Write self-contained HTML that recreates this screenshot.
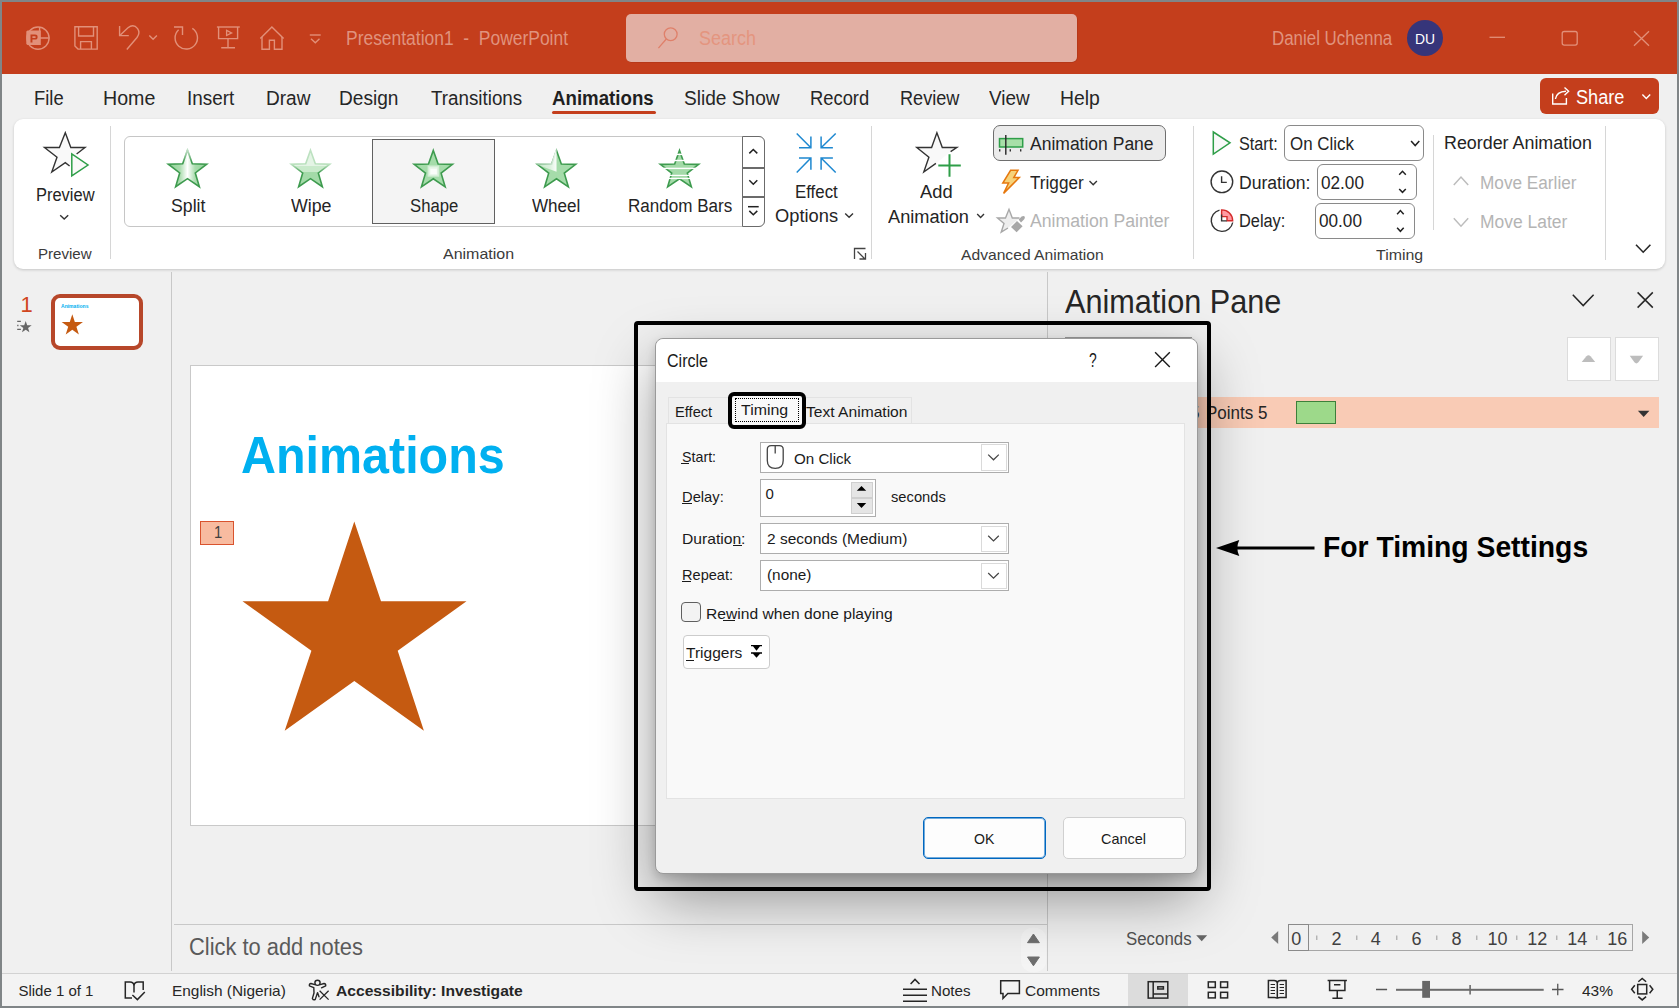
<!DOCTYPE html><html><head><meta charset="utf-8"><style>
html,body{margin:0;padding:0;}
body{width:1679px;height:1008px;overflow:hidden;position:relative;background:#f0f0f0;font-family:"Liberation Sans",sans-serif;}
.r{position:absolute;box-sizing:border-box;}
.t{position:absolute;white-space:pre;transform-origin:0 0;}
</style></head><body>
<div class="r" style="left:0px;top:0px;width:1679px;height:1008px;background:#f0f0f0;"></div>
<div class="r" style="left:2px;top:2px;width:1675px;height:72px;background:#c43e1c;"></div>
<div class="t" style="left:345.70px;top:28.299999999999997px;font-size:20px;line-height:20px;color:#e0937e;transform:scaleX(0.8720);">Presentation1  -  PowerPoint</div>
<div class="r" style="left:626px;top:14px;width:451px;height:48px;background:#e2afa3;border-radius:5px;box-shadow:0.5px 0.5px 0 rgba(120,30,10,0.35);"></div>
<div class="t" style="left:699.00px;top:28.299999999999997px;font-size:20px;line-height:20px;color:#e4957f;transform:scaleX(0.8991);">Search</div>
<div class="t" style="left:1271.70px;top:28.299999999999997px;font-size:20px;line-height:20px;color:#e0937e;transform:scaleX(0.8448);">Daniel Uchenna</div>
<div class="r" style="left:1407px;top:20px;width:36px;height:36px;background:#36357a;border-radius:50%;"></div>
<div class="t" style="left:1415.00px;top:31.75px;font-size:14px;line-height:14px;color:#ffffff;transform:scaleX(0.9901);">DU</div>
<svg class="r" style="left:0px;top:0px;" width="340" height="74" viewBox="0 0 340 74"><g fill="none" stroke="#e29079" stroke-width="1.4"><circle cx="38" cy="38.1" r="11.1"/><path d="M39.6 27 V38 H49.3"/></g><path fill="#e29079" d="M26.3 31.5 L27.5 30.4 H40.8 V45 H27.5 L26.3 44 Z"/><path fill="#c43e1c" d="M30.5 34.6 H35 Q37.6 34.6 37.6 37 Q37.6 39.6 35 39.6 H32.4 V42.6 H30.5 Z M32.4 36.2 V38 H34.8 Q35.8 38 35.8 37.1 Q35.8 36.2 34.8 36.2 Z"/><g fill="none" stroke="#e29079" stroke-width="1.4"><path d="M74.9 26.7 H97.2 V49.1 H78 L74.9 46 Z"/><path d="M78.6 26.7 V36 H93.5 V26.7"/><path d="M80.6 49.1 V41.6 H91.4 V49.1"/></g><g fill="none" stroke="#e29079" stroke-width="1.4"><path d="M119.6 26 V35.6 H128.8"/><path d="M119.8 35.4 L128 27.8 Q133.5 23.5 137.6 28.6 Q140.5 32.8 137 37.5 L126.8 49.5"/><path d="M149.3 35.4 L153.1 39.3 L156.9 35.4"/></g><g fill="none" stroke="#e29079" stroke-width="1.4"><path d="M178.6 29.7 A11.2 11.2 0 1 0 192.3 28.4"/><path d="M174 27 H182.5 V35"/></g><g fill="none" stroke="#e29079" stroke-width="1.4"><path d="M216.9 27 H239.8"/><path d="M218.6 27 V38.6 H237.6 V27"/><path d="M228 38.6 V47.7 M221.2 47.7 H235"/></g><path fill="none" stroke="#e29079" stroke-width="1.3" d="M226.6 30.3 V35.5 L231.6 32.9 Z"/><g fill="none" stroke="#e29079" stroke-width="1.4"><path d="M260.3 38.6 L271.9 27 L283.6 38.6"/><path d="M262 37 V49.2 H269.4 V40.3 H274.4 V49.2 H282 V37"/></g><g fill="none" stroke="#e29079" stroke-width="1.4"><path d="M309.8 35 H320.7"/><path d="M311 38.8 L315.3 42.8 L319.5 38.8"/></g></svg>
<svg class="r" style="left:640px;top:20px;" width="60" height="36" viewBox="0 0 60 36"><g fill="none" stroke="#df806a" stroke-width="1.3"><circle cx="30.7" cy="14.3" r="6.4"/><path d="M26.3 19 L18.4 28.2"/></g></svg>
<svg class="r" style="left:1480px;top:20px;" width="180" height="36" viewBox="0 0 180 36"><g fill="none" stroke="#e29079" stroke-width="1.3"><path d="M9.5 17.3 H25"/><rect x="82.2" y="11.5" width="15" height="13.6" rx="2"/><path d="M154 11.2 L169 25.8 M169 11.2 L154 25.8"/></g></svg>
<div class="t" style="left:34.40px;top:88.1px;font-size:20px;line-height:20px;color:#262626;transform:scaleX(0.9193);">File</div>
<div class="t" style="left:103.30px;top:88.1px;font-size:20px;line-height:20px;color:#262626;transform:scaleX(0.9813);">Home</div>
<div class="t" style="left:187.20px;top:88.1px;font-size:20px;line-height:20px;color:#262626;transform:scaleX(0.9440);">Insert</div>
<div class="t" style="left:265.50px;top:88.1px;font-size:20px;line-height:20px;color:#262626;transform:scaleX(0.9529);">Draw</div>
<div class="t" style="left:339.20px;top:88.1px;font-size:20px;line-height:20px;color:#262626;transform:scaleX(0.9551);">Design</div>
<div class="t" style="left:430.50px;top:88.1px;font-size:20px;line-height:20px;color:#262626;transform:scaleX(0.9392);">Transitions</div>
<div class="t" style="left:684.20px;top:88.1px;font-size:20px;line-height:20px;color:#262626;transform:scaleX(0.9550);">Slide Show</div>
<div class="t" style="left:809.70px;top:88.1px;font-size:20px;line-height:20px;color:#262626;transform:scaleX(0.9178);">Record</div>
<div class="t" style="left:899.60px;top:88.1px;font-size:20px;line-height:20px;color:#262626;transform:scaleX(0.9055);">Review</div>
<div class="t" style="left:989.20px;top:88.1px;font-size:20px;line-height:20px;color:#262626;transform:scaleX(0.9442);">View</div>
<div class="t" style="left:1060.20px;top:88.1px;font-size:20px;line-height:20px;color:#262626;transform:scaleX(0.9684);">Help</div>
<div class="t" style="left:552.30px;top:88.1px;font-size:20px;line-height:20px;color:#1f1f1f;font-weight:bold;transform:scaleX(0.9339);">Animations</div>
<div class="r" style="left:552px;top:111px;width:104px;height:3px;background:#c43e1c;border-radius:2px;"></div>
<div class="r" style="left:1540px;top:78px;width:119px;height:36px;background:#c43e1c;border-radius:6px;"></div>
<div class="t" style="left:1576.30px;top:86.5px;font-size:20px;line-height:20px;color:#ffffff;transform:scaleX(0.9064);">Share</div>
<svg class="r" style="left:1540px;top:78px;" width="120" height="36" viewBox="0 0 120 36"><g fill="none" stroke="#fff" stroke-width="1.4"><path d="M12.7 15.4 V26 H26.4 V20"/><path d="M15.4 21 Q16.5 13.5 26 13.2"/><path d="M24.5 9.5 L28.6 13.3 L24.5 17.2"/><path d="M102.4 16.4 L106.3 20.4 L110.2 16.4"/></g></svg>
<div class="r" style="left:14px;top:119px;width:1651px;height:150px;background:#fff;border-radius:9px;box-shadow:0 1px 3px rgba(0,0,0,0.18);"></div>
<div class="t" style="left:36.20px;top:185.7px;font-size:18px;line-height:18px;color:#242424;transform:scaleX(0.9142);">Preview</div>
<div class="t" style="left:37.60px;top:246.39999999999998px;font-size:15px;line-height:15px;color:#3b3b3b;transform:scaleX(1.0056);">Preview</div>
<div class="r" style="left:110px;top:126px;width:1px;height:133px;background:#d6d6d6;"></div>
<div class="r" style="left:124px;top:136px;width:641px;height:91px;border:1px solid #c6c6c6;border-radius:6px;"></div>
<div class="r" style="left:372px;top:139px;width:123px;height:85px;background:#f4f4f4;border:1px solid #616161;"></div>
<div class="t" style="left:170.60px;top:196.8px;font-size:18px;line-height:18px;color:#242424;transform:scaleX(0.9829);">Split</div>
<div class="t" style="left:290.50px;top:197px;font-size:18px;line-height:18px;color:#242424;transform:scaleX(0.9878);">Wipe</div>
<div class="t" style="left:409.50px;top:197px;font-size:18px;line-height:18px;color:#242424;transform:scaleX(0.9271);">Shape</div>
<div class="t" style="left:532.40px;top:197px;font-size:18px;line-height:18px;color:#242424;transform:scaleX(0.9471);">Wheel</div>
<div class="t" style="left:628.00px;top:197px;font-size:18px;line-height:18px;color:#242424;transform:scaleX(0.9473);">Random Bars</div>
<div class="r" style="left:742px;top:136px;width:23px;height:91px;background:#fff;border:1px solid #6b6b6b;border-radius:0 6px 6px 0;"></div>
<div class="r" style="left:742px;top:167px;width:23px;height:2px;background:#6b6b6b;"></div>
<div class="r" style="left:742px;top:196px;width:23px;height:2px;background:#6b6b6b;"></div>
<div class="t" style="left:795.00px;top:183.3px;font-size:18px;line-height:18px;color:#242424;transform:scaleX(0.9365);">Effect</div>
<div class="t" style="left:775.30px;top:207.2px;font-size:18px;line-height:18px;color:#242424;transform:scaleX(1.0161);">Options</div>
<div class="t" style="left:443.40px;top:246px;font-size:15px;line-height:15px;color:#3b3b3b;transform:scaleX(1.0660);">Animation</div>
<div class="r" style="left:871px;top:126px;width:1px;height:133px;background:#d6d6d6;"></div>
<div class="t" style="left:920.40px;top:183.4px;font-size:18px;line-height:18px;color:#242424;transform:scaleX(1.0188);">Add</div>
<div class="t" style="left:887.60px;top:207.7px;font-size:18px;line-height:18px;color:#242424;transform:scaleX(1.0112);">Animation</div>
<div class="r" style="left:993px;top:125px;width:173px;height:36px;background:#ebebeb;border:1px solid #6e6e6e;border-radius:7px;"></div>
<div class="t" style="left:1029.60px;top:134.8px;font-size:18px;line-height:18px;color:#242424;transform:scaleX(0.9725);">Animation Pane</div>
<div class="t" style="left:1029.60px;top:173.75px;font-size:18px;line-height:18px;color:#242424;transform:scaleX(0.9520);">Trigger</div>
<div class="t" style="left:1029.60px;top:212.4px;font-size:18px;line-height:18px;color:#b4b4b4;transform:scaleX(0.9810);">Animation Painter</div>
<div class="t" style="left:960.60px;top:246.89999999999998px;font-size:15px;line-height:15px;color:#3b3b3b;transform:scaleX(1.0431);">Advanced Animation</div>
<div class="r" style="left:1193px;top:126px;width:1px;height:133px;background:#d6d6d6;"></div>
<div class="t" style="left:1238.90px;top:134.8px;font-size:18px;line-height:18px;color:#242424;transform:scaleX(0.9000);">Start:</div>
<div class="r" style="left:1284px;top:125px;width:140px;height:36px;background:#fff;border:1px solid #8a8a8a;border-radius:6px;"></div>
<div class="t" style="left:1289.50px;top:134.8px;font-size:18px;line-height:18px;color:#242424;transform:scaleX(0.9398);">On Click</div>
<div class="t" style="left:1239.00px;top:173.75px;font-size:18px;line-height:18px;color:#242424;transform:scaleX(0.9767);">Duration:</div>
<div class="r" style="left:1317px;top:164px;width:100px;height:36px;background:#fff;border:1px solid #8a8a8a;border-radius:6px;"></div>
<div class="t" style="left:1320.70px;top:173.75px;font-size:18px;line-height:18px;color:#242424;transform:scaleX(0.9533);">02.00</div>
<div class="t" style="left:1239.00px;top:212.4px;font-size:18px;line-height:18px;color:#242424;transform:scaleX(0.9078);">Delay:</div>
<div class="r" style="left:1315px;top:203px;width:100px;height:36px;background:#fff;border:1px solid #8a8a8a;border-radius:6px;"></div>
<div class="t" style="left:1318.50px;top:212.4px;font-size:18px;line-height:18px;color:#242424;transform:scaleX(0.9533);">00.00</div>
<div class="t" style="left:1375.50px;top:246.89999999999998px;font-size:15px;line-height:15px;color:#3b3b3b;transform:scaleX(1.0607);">Timing</div>
<div class="r" style="left:1433px;top:135px;width:1px;height:95px;background:#d6d6d6;"></div>
<div class="t" style="left:1443.70px;top:134px;font-size:18px;line-height:18px;color:#242424;transform:scaleX(0.9926);">Reorder Animation</div>
<div class="t" style="left:1479.80px;top:173.7px;font-size:18px;line-height:18px;color:#b4b4b4;transform:scaleX(0.9554);">Move Earlier</div>
<div class="t" style="left:1479.80px;top:213px;font-size:18px;line-height:18px;color:#b4b4b4;transform:scaleX(0.9689);">Move Later</div>
<div class="r" style="left:1605px;top:126px;width:1px;height:134px;background:#d6d6d6;"></div>
<svg class="r" style="left:0px;top:0px;" width="1679" height="280" viewBox="0 0 1679 280"><defs>
<linearGradient id="gSplit" x1="0" x2="1" y1="0" y2="0"><stop offset="0" stop-color="#8fd197"/><stop offset="0.3" stop-color="#a9dcad"/><stop offset="0.5" stop-color="#ffffff"/><stop offset="0.7" stop-color="#a9dcad"/><stop offset="1" stop-color="#8fd197"/></linearGradient>
<linearGradient id="gWipe" x1="0" x2="0" y1="0" y2="1"><stop offset="0" stop-color="#e4f4e5"/><stop offset="0.42" stop-color="#e4f4e5"/><stop offset="0.42" stop-color="#c9eacb"/><stop offset="0.6" stop-color="#c9eacb"/><stop offset="0.6" stop-color="#a3daa8"/><stop offset="1" stop-color="#a3daa8"/></linearGradient>
<linearGradient id="gWipeS" x1="0" x2="0" y1="0" y2="1"><stop offset="0" stop-color="#bfe2c3"/><stop offset="0.4" stop-color="#b6dfba"/><stop offset="0.62" stop-color="#3e9b4f"/><stop offset="1" stop-color="#3e9b4f"/></linearGradient>
<radialGradient id="gShape" cx="0.5" cy="0.55" r="0.5"><stop offset="0" stop-color="#ffffff"/><stop offset="0.18" stop-color="#e6f5e7"/><stop offset="0.45" stop-color="#a8dcac"/><stop offset="1" stop-color="#a8dcac"/></radialGradient>
<linearGradient id="gWheel" x1="0" x2="1" y1="0" y2="0.4"><stop offset="0" stop-color="#cdebcf"/><stop offset="0.48" stop-color="#e8f6e9"/><stop offset="0.5" stop-color="#a8dcac"/><stop offset="1" stop-color="#a3daa8"/></linearGradient>
</defs><polygon points="187.50,150.20 192.32,163.77 206.71,164.16 195.30,172.93 199.37,186.74 187.50,178.60 175.63,186.74 179.70,172.93 168.29,164.16 182.68,163.77" fill="url(#gSplit)" stroke="#3e9b4f" stroke-width="1.6"/><clipPath id="cSp"><polygon points="187.50,147.20 192.79,163.12 209.56,163.23 196.06,173.18 201.14,189.17 187.50,179.40 173.86,189.17 178.94,173.18 165.44,163.23 182.21,163.12"/></clipPath><linearGradient id="gSp2" x1="0" x2="0" y1="0" y2="1"><stop offset="0" stop-color="#fff" stop-opacity="0.9"/><stop offset="0.5" stop-color="#fff" stop-opacity="0.55"/><stop offset="1" stop-color="#fff" stop-opacity="0"/></linearGradient><rect clip-path="url(#cSp)" x="181" y="144" width="13" height="18" fill="url(#gSp2)"/><polygon points="310.50,150.20 315.32,163.77 329.71,164.16 318.30,172.93 322.37,186.74 310.50,178.60 298.63,186.74 302.70,172.93 291.29,164.16 305.68,163.77" fill="url(#gWipe)" stroke="url(#gWipeS)" stroke-width="1.6"/><polygon points="433.30,150.40 438.12,163.97 452.51,164.36 441.10,173.13 445.17,186.94 433.30,178.80 421.43,186.94 425.50,173.13 414.09,164.36 428.48,163.97" fill="#a5dcaa" stroke="#3e9b4f" stroke-width="1.6"/><rect x="427.6" y="165.5" width="11.6" height="11.2" fill="#d3eed5"/><rect x="429.2" y="167.2" width="8.4" height="8.2" fill="#e8f6e9"/><rect x="430.4" y="168.8" width="6.4" height="5.4" fill="#fafdfa"/><polygon points="556.50,150.40 561.32,163.97 575.71,164.36 564.30,173.13 568.37,186.94 556.50,178.80 544.63,186.94 548.70,173.13 537.29,164.36 551.68,163.97" fill="#a5dcaa" stroke="#3e9b4f" stroke-width="1.6"/><clipPath id="cWh"><polygon points="556.50,147.40 561.79,163.32 578.56,163.43 565.06,173.38 570.14,189.37 556.50,179.60 542.86,189.37 547.94,173.38 534.44,163.43 551.21,163.32"/></clipPath><linearGradient id="gWh2" x1="0" x2="1" y1="0" y2="0"><stop offset="0" stop-color="#fff" stop-opacity="0.35"/><stop offset="0.75" stop-color="#fff" stop-opacity="0.6"/><stop offset="1" stop-color="#fff" stop-opacity="0.95"/></linearGradient><path clip-path="url(#cWh)" d="M556.5 171.8 V142 H530 V162 Z" fill="url(#gWh2)"/><clipPath id="cRB"><polygon points="679.50,150.40 684.32,163.97 698.71,164.36 687.30,173.13 691.37,186.94 679.50,178.80 667.63,186.94 671.70,173.13 660.29,164.36 674.68,163.97"/></clipPath><polygon points="679.50,150.40 684.32,163.97 698.71,164.36 687.30,173.13 691.37,186.94 679.50,178.80 667.63,186.94 671.70,173.13 660.29,164.36 674.68,163.97" fill="#a3daa8" stroke="#3e9b4f" stroke-width="1.6"/><g fill="#ffffff"><rect x="655" y="153.7" width="50" height="1.4"/><rect x="655" y="159.8" width="50" height="1.4"/><rect x="655" y="167.7" width="50" height="1.4"/><rect x="655" y="174.8" width="50" height="1.2"/><rect x="655" y="177.8" width="50" height="1.3"/></g><g fill="#f9f9f9" stroke="#333" stroke-width="1.4" stroke-linejoin="miter"><path d="M69.6 166 L65.3 162.6 L51.8 172 L57 157.2 L44.5 147.5 L59.4 147.5 L65.3 132.8 L70.8 147.5 L85 147.5 L76.6 154"/></g><path d="M71.8 154 V175.8 L88 165 Z" fill="#f9f9f9" stroke="#2e9e48" stroke-width="1.5" stroke-linejoin="miter"/><path d="M60.2 215.2 L64.2 219 L68.2 215.2" fill="none" stroke="#333" stroke-width="1.4"/><g fill="none" stroke="#222" stroke-width="1.5"><path d="M749.3 153.4 L753.3 149.5 L757.3 153.4"/><path d="M749.3 180.2 L753.3 184.2 L757.3 180.2"/><path d="M748 206.7 H758.7"/><path d="M749.3 210.9 L753.3 214.8 L757.3 210.9"/></g><g fill="none" stroke="#1e88d0" stroke-width="1.5"><path d="M796.7 133.5 L810.9 147.7 M810.9 136.4 V147.7 H799"/><path d="M835.7 133.5 L821.1 147.7 M821.1 136.4 V147.7 H832.9"/><path d="M796.7 172.5 L810.9 158 M810.9 169.7 V158 H799"/><path d="M835.7 172.5 L821.1 158 M821.1 169.7 V158 H832.9"/></g><path d="M845.2 213.4 L849.1 217.3 L853 213.4" fill="none" stroke="#333" stroke-width="1.4"/><g fill="none" stroke="#444" stroke-width="1.3"><path d="M854.5 259 V248.5 H865.5"/><path d="M857.5 251.5 L865.2 259.2 M859.5 259 H865.5 V253"/></g><g fill="#f9f9f9" stroke="#333" stroke-width="1.4"><path d="M935.9 163.4 L923.8 172 L928.9 157.2 L916.8 147.5 L931.6 147.5 L936.9 132.8 L942.3 147.5 L956.8 147.5 L950.6 151.6"/></g><g stroke="#2e9e48" stroke-width="2"><path d="M949.5 154.2 V176.7 M938.3 165.5 H960.8"/></g><path d="M977.2 214 L980.6 217.4 L984 214" fill="none" stroke="#333" stroke-width="1.4"/><rect x="999.5" y="138.6" width="23.2" height="8.4" fill="#a8dfa8" stroke="#2e9e48" stroke-width="1.5"/><path d="M1005.8 135 V154.8" stroke="#262626" stroke-width="1.4"/><g fill="#333"><rect x="999" y="149.2" width="1.4" height="2.3"/><rect x="1009.6" y="149.2" width="1.4" height="2.3"/><rect x="1020" y="149.2" width="1.4" height="2.3"/></g><path d="M1018 170.3 H1010.6 L1002.8 183 H1008.6 L1003.6 193.4 L1019.3 177.6 H1013.8 Z" fill="#f6d27a" stroke="#e6780e" stroke-width="1.5" stroke-linejoin="miter"/><path d="M1089.5 181 L1093.2 184.7 L1096.9 181" fill="none" stroke="#333" stroke-width="1.4"/><g fill="#eeeeee" stroke="#a8a8a8" stroke-width="1.4"><path d="M1008 228 L1001.2 232.2 L1004 223.5 L997.5 218 L1005.5 218 L1009 209.3 L1012.3 218 L1019.5 218"/></g><path d="M1011 227 L1017 221 L1022.6 226.3 L1016.6 232.3 Z M1018.6 219.6 L1021.6 216.6 Q1023.6 215.3 1024.6 216.6 Q1025.3 218 1024 219.6 L1021 222.6 Z" fill="#a8a8a8"/><path d="M1213.3 132 V154 L1230 142.8 Z" fill="#f9f9f9" stroke="#2e9e48" stroke-width="1.5"/><g fill="none" stroke="#333" stroke-width="1.4"><circle cx="1221.9" cy="181.8" r="10.8"/><path d="M1221.6 176.2 V182.4 H1226.8"/></g><path d="M1221.6 209.9 A10.8 10.8 0 0 1 1232.7 220.7 H1227 V216.6 H1221.6 Z" fill="#ff9aa2" stroke="#d42a2a" stroke-width="1.4"/><g fill="none" stroke="#333" stroke-width="1.4"><path d="M1219.5 210.1 A10.8 10.8 0 1 0 1232.7 222.5"/><path d="M1221.6 214.5 V220.9 H1226.8"/></g><g fill="none" stroke="#222" stroke-width="1.5"><path d="M1411.1 141 L1415.2 145.6 L1419.3 141"/><path d="M1399.2 174.7 L1402.5 171.3 L1405.8 174.7 M1399.2 188.9 L1402.5 192.3 L1405.8 188.9"/><path d="M1397.1 214.3 L1400.4 210.6 L1403.7 214.3 M1397.1 227.7 L1400.4 231.3 L1403.7 227.7"/></g><g fill="none" stroke="#bdbdbd" stroke-width="1.5"><path d="M1453.8 185 L1461 177 L1468.2 185"/><path d="M1453.8 218.2 L1461 226.2 L1468.2 218.2"/></g><path d="M1636 244.8 L1643.2 252.2 L1650.4 244.8" fill="none" stroke="#262626" stroke-width="1.6"/></svg>
<div class="r" style="left:171px;top:272px;width:1px;height:699px;background:#c8c8c8;"></div>
<div class="r" style="left:1047px;top:272px;width:1px;height:699px;background:#c8c8c8;"></div>
<div class="r" style="left:174px;top:924px;width:873px;height:1px;background:#c8c8c8;"></div>
<div class="t" style="left:20.50px;top:293.8px;font-size:22px;line-height:22px;color:#d0461f;">1</div>
<div class="r" style="left:51px;top:294px;width:92px;height:56px;background:#fff;border:4px solid #b7472a;border-radius:9px;"></div>
<div class="t" style="left:61px;top:303px;font-size:12px;line-height:12px;color:#00b0f0;font-weight:bold;transform:scale(0.42,0.5);">Animations</div><div class="r" style="left:190px;top:365px;width:819px;height:461px;background:#fff;border:1px solid #c9c9c9;"></div>
<div class="t" style="left:240.60px;top:428.5px;font-size:52px;line-height:52px;color:#00b0f0;font-weight:bold;transform:scaleX(0.9315);">Animations</div>
<div class="r" style="left:200px;top:521px;width:34px;height:24px;background:#f8bba0;border:1px solid #d9532e;"></div>
<div class="t" style="left:213.50px;top:525.4px;font-size:16px;line-height:16px;color:#404040;transform:scaleX(0.9213);">1</div>
<svg class="r" style="left:230px;top:510px;" width="250" height="230" viewBox="0 0 250 230"><polygon fill="#c55a11" points="124.3,11.4 151,91.2 236.5,91.2 167.7,140.7 193.9,220.8 124.3,171.1 54.7,220.8 81.4,140.7 12.5,91.2 98.1,91.2"/></svg>
<div class="t" style="left:189.00px;top:935.8px;font-size:23px;line-height:23px;color:#5a5a5a;transform:scaleX(0.9508);">Click to add notes</div>
<div class="t" style="left:1064.80px;top:284.9px;font-size:33px;line-height:33px;color:#262626;transform:scaleX(0.9283);">Animation Pane</div>
<div class="r" style="left:1567px;top:337px;width:44px;height:44px;background:#fff;border:1px solid #dcdcdc;"></div>
<div class="r" style="left:1615px;top:337px;width:44px;height:44px;background:#fff;border:1px solid #dcdcdc;"></div>
<div class="r" style="left:1160px;top:397px;width:499px;height:31px;background:#f9cbb5;"></div>
<div class="t" style="left:1205.80px;top:404px;font-size:18px;line-height:18px;color:#262626;transform:scaleX(0.9446);">Points 5</div>
<div class="t" style="left:1189.50px;top:404px;font-size:18px;line-height:18px;color:#262626;">5</div>
<div class="r" style="left:1296px;top:401px;width:40px;height:23px;background:#9dd98a;border:1px solid #3d7f3a;"></div>
<div class="t" style="left:1322.70px;top:532.4px;font-size:30px;line-height:30px;color:#000000;font-weight:bold;transform:scaleX(0.9431);">For Timing Settings</div>
<div class="t" style="left:1125.50px;top:929.8px;font-size:18px;line-height:18px;color:#505050;transform:scaleX(0.9358);">Seconds</div>
<div class="r" style="left:1288px;top:924px;width:345px;height:27px;border:1px solid #a6a6a6;"></div>
<div class="r" style="left:1288px;top:924px;width:21px;height:27px;border:1px solid #8a8a8a;"></div>
<div class="t" style="left:1291.20px;top:929.8px;font-size:18px;line-height:18px;color:#404040;">0</div>
<div class="t" style="left:1331.40px;top:929.8px;font-size:18px;line-height:18px;color:#404040;">2</div>
<div class="t" style="left:1370.70px;top:929.8px;font-size:18px;line-height:18px;color:#404040;">4</div>
<div class="t" style="left:1411.50px;top:929.8px;font-size:18px;line-height:18px;color:#404040;">6</div>
<div class="t" style="left:1451.40px;top:929.8px;font-size:18px;line-height:18px;color:#404040;">8</div>
<div class="t" style="left:1487.60px;top:929.8px;font-size:18px;line-height:18px;color:#404040;">10</div>
<div class="t" style="left:1527.20px;top:929.8px;font-size:18px;line-height:18px;color:#404040;">12</div>
<div class="t" style="left:1567.30px;top:929.8px;font-size:18px;line-height:18px;color:#404040;">14</div>
<div class="t" style="left:1607.20px;top:929.8px;font-size:18px;line-height:18px;color:#404040;">16</div>
<div class="r" style="left:2px;top:973px;width:1675px;height:1px;background:#d2d2d2;"></div>
<div class="r" style="left:2px;top:974px;width:1675px;height:32px;background:#f3f3f3;"></div>
<div class="r" style="left:1128px;top:974px;width:60px;height:32px;background:#dcdcdc;"></div>
<div class="t" style="left:18.40px;top:982.7px;font-size:15px;line-height:15px;color:#262626;">Slide 1 of 1</div>
<div class="t" style="left:171.50px;top:982.7px;font-size:15px;line-height:15px;color:#262626;transform:scaleX(1.0261);">English (Nigeria)</div>
<div class="t" style="left:335.60px;top:982.7px;font-size:15px;line-height:15px;color:#262626;font-weight:bold;transform:scaleX(1.0419);">Accessibility: Investigate</div>
<div class="t" style="left:930.60px;top:982.7px;font-size:15px;line-height:15px;color:#262626;transform:scaleX(1.0102);">Notes</div>
<div class="t" style="left:1025.30px;top:982.7px;font-size:15px;line-height:15px;color:#262626;transform:scaleX(1.0345);">Comments</div>
<div class="t" style="left:1581.90px;top:982.7px;font-size:15px;line-height:15px;color:#262626;transform:scaleX(1.0333);">43%</div>
<svg class="r" style="left:0px;top:270px;" width="1679" height="738" viewBox="0 270 1679 738"><polygon points="25.70,320.90 27.17,325.18 31.69,325.25 28.08,327.97 29.40,332.30 25.70,329.70 22.00,332.30 23.32,327.97 19.71,325.25 24.23,325.18" fill="#666"/><g stroke="#666" stroke-width="1.3"><path d="M17.2 321.4 H20.9 M17.2 329.4 H20.9 M17.2 325.5 H18.5"/></g><polygon points="72.30,314.30 74.83,322.02 82.95,322.04 76.39,326.83 78.88,334.56 72.30,329.80 65.72,334.56 68.21,326.83 61.65,322.04 69.77,322.02" fill="#c55a11"/><g fill="none" stroke="#262626" stroke-width="1.5"><path d="M1572.8 294.8 L1583.2 305.6 L1593.6 294.8"/><path d="M1637.6 292.4 L1652.8 307.6 M1652.8 292.4 L1637.6 307.6"/></g><path d="M1581.7 362.1 H1595.2 L1590.5 356.3 Q1588.45 354.4 1586.4 356.3 Z" fill="#bdbdbd"/><path d="M1629.7 355.7 H1643.1 L1638.4 362.3 Q1636.4 364.6 1634.4 362.3 Z" fill="#bdbdbd"/><path d="M1637.9 410.8 H1649.4 L1643.65 417 Z" fill="#333"/><path d="M1232 546.4 H1314.5 V549.6 H1232 Z" fill="#000"/><path d="M1216 548 L1239.3 540 Q1235.3 548 1239.3 556 Z" fill="#000"/><path d="M1196.2 935.2 H1207.2 L1201.7 941.3 Z" fill="#666"/><path d="M1278.2 931 V944 L1271.2 937.5 Z" fill="#7a7a7a"/><path d="M1642.2 931 V944 L1649.2 937.5 Z" fill="#7a7a7a"/><rect x="1316.3" y="935.5" width="1" height="4.5" fill="#9a9a9a"/><rect x="1356.3" y="935.5" width="1" height="4.5" fill="#9a9a9a"/><rect x="1396.3" y="935.5" width="1" height="4.5" fill="#9a9a9a"/><rect x="1436.3" y="935.5" width="1" height="4.5" fill="#9a9a9a"/><rect x="1476.3" y="935.5" width="1" height="4.5" fill="#9a9a9a"/><rect x="1516.3" y="935.5" width="1" height="4.5" fill="#9a9a9a"/><rect x="1556.3" y="935.5" width="1" height="4.5" fill="#9a9a9a"/><rect x="1596.3" y="935.5" width="1" height="4.5" fill="#9a9a9a"/><rect x="1021" y="927.6" width="25.3" height="44.7" rx="12" fill="#ffffff" fill-opacity="0.3"/><path d="M1027.5 942.7 H1039.4 L1033.45 934 Z" fill="#6e6e6e" stroke="#6e6e6e" stroke-width="1" stroke-linejoin="round"/><path d="M1027.5 957 H1039.4 L1033.45 965.8 Z" fill="#6e6e6e" stroke="#6e6e6e" stroke-width="1" stroke-linejoin="round"/><g fill="none" stroke="#262626" stroke-width="1.5"><path d="M134 992.5 V985.5 Q133.5 982 130 982 H125.3 V998 H132"/><path d="M134 985.5 Q134.5 982 138 982 H143.2 V990"/><path d="M132.4 995 L137.4 999.6 L144.8 992"/></g><g fill="none" stroke="#262626" stroke-width="1.4" stroke-linecap="round" stroke-linejoin="round"><circle cx="317.5" cy="982.8" r="2.6"/><path d="M314.8 984.6 L311 983.5 Q309 983.8 309.4 985.8 L313.8 987.6 L314 993 L312.4 998.4 Q313.2 1000.3 315.2 999.6 L317.5 992.6 L319 996.8"/><path d="M320.2 984.6 L324 983.5 Q326 983.8 325.7 985.8 L321.5 987.8"/></g><g stroke="#262626" stroke-width="1.3"><path d="M319.6 990.8 L328.6 999.6 M328.6 990.8 L319.6 999.6"/></g><g fill="none" stroke="#262626" stroke-width="1.5"><path d="M903 989.2 H927 M903 995.3 H927 M903 1001.3 H927"/><path d="M910.6 984 L915 979.4 L919.5 984"/></g><path d="M1000.7 980.7 H1019.4 V993.4 H1007.8 L1003 998.4 V993.4 H1000.7 Z" fill="none" stroke="#262626" stroke-width="1.5" stroke-linejoin="miter"/><g fill="none" stroke="#262626" stroke-width="1.5"><rect x="1148.2" y="981.7" width="19.6" height="16.4"/><path d="M1153.2 981.7 V998.1 M1153.2 994 H1167.8"/><rect x="1157.8" y="986.8" width="5.6" height="2.2"/></g><g fill="none" stroke="#262626" stroke-width="1.5"><rect x="1208.3" y="981.9" width="7" height="5.6"/><rect x="1220.6" y="981.9" width="7" height="5.6"/><rect x="1208.3" y="992.3" width="7" height="5.6"/><rect x="1220.6" y="992.3" width="7" height="5.6"/></g><g fill="none" stroke="#262626" stroke-width="1.5"><path d="M1268.4 980.6 H1274 Q1277 980.6 1277.3 983 Q1277.6 980.6 1280.6 980.6 H1286.1 V997.4 H1280 Q1277.6 997.4 1277.3 998.6 Q1277 997.4 1274.6 997.4 H1268.4 Z"/><path d="M1277.3 983 V998"/></g><g stroke="#262626" stroke-width="1"><path d="M1270.6 984.5 H1275 M1270.6 987.5 H1275 M1270.6 990.5 H1275 M1270.6 993.5 H1275 M1279.6 984.5 H1284 M1279.6 987.5 H1284 M1279.6 990.5 H1284 M1279.6 993.5 H1284"/></g><g fill="none" stroke="#262626" stroke-width="1.5"><path d="M1327.6 980.6 H1346.9 M1329.6 980.6 V990.6 H1344.9 V980.6 M1334 984.7 H1340.4 M1337.25 990.6 V998.2 M1332.4 998.2 H1342.6"/></g><g stroke="#555" stroke-width="1.3"><path d="M1376 989.5 H1387.1 M1552 989.5 H1563.5 M1557.75 983.8 V995.3"/></g><rect x="1396" y="988.8" width="147.7" height="2" fill="#6b6b6b"/><rect x="1469.3" y="985" width="1.6" height="9.5" fill="#6b6b6b"/><rect x="1422.2" y="980.9" width="7.8" height="16.9" fill="#666"/><g fill="none" stroke="#262626" stroke-width="1.5"><rect x="1637.7" y="984.5" width="9" height="9.4"/><path d="M1638.3 981.7 L1642.2 978.4 L1646.1 981.7 M1638.3 996.6 L1642.2 999.9 L1646.1 996.6 M1634.8 985.2 L1631.6 989.2 L1634.8 993.2 M1649.6 985.2 L1652.8 989.2 L1649.6 993.2"/></g></svg>
<div class="r" style="left:655px;top:338px;width:543px;height:536px;background:#f0f0f0;border:1px solid #9a9a9a;border-radius:8px;box-shadow:0 24px 60px rgba(0,0,0,0.40),0 4px 10px rgba(0,0,0,0.15);"></div>
<div class="r" style="left:656px;top:339px;width:541px;height:43px;background:#fff;border-radius:8px 8px 0 0;"></div>
<div class="t" style="left:667.30px;top:350.8px;font-size:19px;line-height:19px;color:#1a1a1a;transform:scaleX(0.8436);">Circle</div>
<div class="t" style="left:1088.90px;top:349.1px;font-size:21px;line-height:21px;color:#1a1a1a;transform:scaleX(0.6581);">?</div>
<div class="r" style="left:668px;top:397px;width:244px;height:27px;background:#f0f0f0;border:1px solid #e3e3e3;border-bottom:none;"></div>
<div class="r" style="left:666px;top:423px;width:519px;height:376px;background:#f9f9f9;border:1px solid #e3e3e3;"></div>
<div class="t" style="left:674.70px;top:403.7px;font-size:15px;line-height:15px;color:#1a1a1a;transform:scaleX(0.9764);">Effect</div>
<div class="t" style="left:806.30px;top:403.7px;font-size:15px;line-height:15px;color:#1a1a1a;transform:scaleX(1.0400);">Text Animation</div>
<div class="r" style="left:728px;top:392px;width:78px;height:37px;background:#f9f9f9;border:4px solid #000;border-radius:6px;"></div>
<div class="r" style="left:735px;top:398px;width:64px;height:24px;border:1px dotted #000;"></div>
<div class="t" style="left:740.50px;top:401.7px;font-size:15px;line-height:15px;color:#1a1a1a;transform:scaleX(1.0607);">Timing</div>
<div class="t" style="left:681.70px;top:448.6px;font-size:15px;line-height:15px;color:#1a1a1a;transform:scaleX(0.9497);">Start:</div>
<div class="r" style="left:760px;top:442px;width:249px;height:31px;background:#fff;border:1px solid #adadad;"></div>
<div class="r" style="left:981px;top:444px;width:26px;height:27px;border:1px solid #dadada;"></div>
<div class="t" style="left:793.50px;top:450.7px;font-size:15px;line-height:15px;color:#1a1a1a;transform:scaleX(1.0088);">On Click</div>
<div class="t" style="left:681.50px;top:488.7px;font-size:15px;line-height:15px;color:#1a1a1a;transform:scaleX(0.9812);">Delay:</div>
<div class="r" style="left:760px;top:479px;width:116px;height:38px;background:#fff;border:1px solid #adadad;"></div>
<div class="r" style="left:851px;top:482px;width:22px;height:16px;background:#e5e5e5;border:1px solid #cfcfcf;"></div>
<div class="r" style="left:851px;top:498px;width:22px;height:16px;background:#e5e5e5;border:1px solid #cfcfcf;"></div>
<div class="t" style="left:765.50px;top:485.6px;font-size:15px;line-height:15px;color:#1a1a1a;">0</div>
<div class="t" style="left:891.40px;top:488.7px;font-size:15px;line-height:15px;color:#1a1a1a;transform:scaleX(0.9803);">seconds</div>
<div class="t" style="left:681.50px;top:530.8px;font-size:15px;line-height:15px;color:#1a1a1a;transform:scaleX(1.0427);">Duration:</div>
<div class="r" style="left:760px;top:523px;width:249px;height:31px;background:#fff;border:1px solid #adadad;"></div>
<div class="r" style="left:981px;top:526px;width:26px;height:26px;border:1px solid #dadada;"></div>
<div class="t" style="left:767.40px;top:530.8px;font-size:15px;line-height:15px;color:#1a1a1a;transform:scaleX(1.0324);">2 seconds (Medium)</div>
<div class="t" style="left:681.50px;top:566.9px;font-size:15px;line-height:15px;color:#1a1a1a;transform:scaleX(0.9714);">Repeat:</div>
<div class="r" style="left:760px;top:560px;width:249px;height:31px;background:#fff;border:1px solid #adadad;"></div>
<div class="r" style="left:981px;top:563px;width:26px;height:26px;border:1px solid #dadada;"></div>
<div class="t" style="left:767.40px;top:566.9px;font-size:15px;line-height:15px;color:#1a1a1a;transform:scaleX(1.0230);">(none)</div>
<div class="r" style="left:681px;top:602px;width:20px;height:20px;background:#f3f3f3;border:1px solid #5f5f5f;border-radius:4px;"></div>
<div class="t" style="left:705.70px;top:605.6px;font-size:15px;line-height:15px;color:#1a1a1a;transform:scaleX(1.0413);">Rewind when done playing</div>
<div class="r" style="left:683px;top:635px;width:87px;height:34px;background:#fff;border:1px solid #cccccc;border-radius:4px;"></div>
<div class="t" style="left:686.00px;top:644.9px;font-size:15px;line-height:15px;color:#1a1a1a;transform:scaleX(1.0349);">Triggers</div>
<div class="r" style="left:923px;top:817px;width:123px;height:42px;background:#fdfdfd;border:1px solid #0067c0;box-shadow:inset 0 0 0 1px rgba(0,103,192,0.55);border-radius:5px;"></div>
<div class="t" style="left:974.30px;top:830.8px;font-size:15px;line-height:15px;color:#1a1a1a;transform:scaleX(0.9401);">OK</div>
<div class="r" style="left:1063px;top:817px;width:123px;height:42px;background:#fdfdfd;border:1px solid #d0d0d0;border-radius:5px;"></div>
<div class="t" style="left:1101.40px;top:830.8px;font-size:15px;line-height:15px;color:#1a1a1a;transform:scaleX(0.9636);">Cancel</div>
<svg class="r" style="left:600px;top:300px;" width="650" height="600" viewBox="600 300 650 600"><g fill="none" stroke="#1a1a1a" stroke-width="1.4"><path d="M1155.1 352.3 L1169.8 367 M1169.8 352.3 L1155.1 367"/></g><path d="M771.2 445.6 H779.3 Q783.2 445.6 783.2 449.5 V460.5 Q783.2 468.3 775.25 468.3 Q767.3 468.3 767.3 460.5 V449.5 Q767.3 445.6 771.2 445.6 Z M775.2 445.6 V453.5" fill="none" stroke="#444" stroke-width="1.3"/><path d="M988.2 454.6 L993.5 459.8 L998.8 454.6" fill="none" stroke="#444" stroke-width="1.2"/><path d="M988.2 535.8 L993.5 541.0 L998.8 535.8" fill="none" stroke="#444" stroke-width="1.2"/><path d="M988.2 573.0 L993.5 578.2 L998.8 573.0" fill="none" stroke="#444" stroke-width="1.2"/><path d="M856.8 490.8 H866.2 L861.5 486 Z M856.8 503.1 H866.2 L861.5 507.9 Z" fill="#000"/><path d="M751 645 H762 V646.2 H760 L756.5 650.8 L753 646.2 H751 Z M751 652.2 H762 V653.8 H760 L756.5 657.8 L753 653.8 H751 Z" fill="#000"/></svg>
<div class="r" style="left:681px;top:463px;width:8px;height:1px;background:#1a1a1a;"></div>
<div class="r" style="left:682px;top:503px;width:10px;height:1px;background:#1a1a1a;"></div>
<div class="r" style="left:733px;top:545px;width:9px;height:1px;background:#1a1a1a;"></div>
<div class="r" style="left:682px;top:581px;width:9px;height:1px;background:#1a1a1a;"></div>
<div class="r" style="left:723px;top:620px;width:12px;height:1px;background:#1a1a1a;"></div>
<div class="r" style="left:686px;top:659.5px;width:8px;height:1.0px;background:#1a1a1a;"></div>
<div class="r" style="left:1065px;top:337px;width:127px;height:1px;background:#8a8a8a;"></div>
<div class="r" style="left:634px;top:321px;width:577px;height:570px;border:4px solid #000;border-radius:4px;"></div>
<div class="r" style="left:0px;top:0px;width:1679px;height:2px;background:#808587;"></div>
<div class="r" style="left:0px;top:0px;width:2px;height:1008px;background:#808587;"></div>
<div class="r" style="left:1677px;top:0px;width:2px;height:1008px;background:#808587;"></div>
<div class="r" style="left:0px;top:1006px;width:1679px;height:2px;background:#808587;"></div>
</body></html>
